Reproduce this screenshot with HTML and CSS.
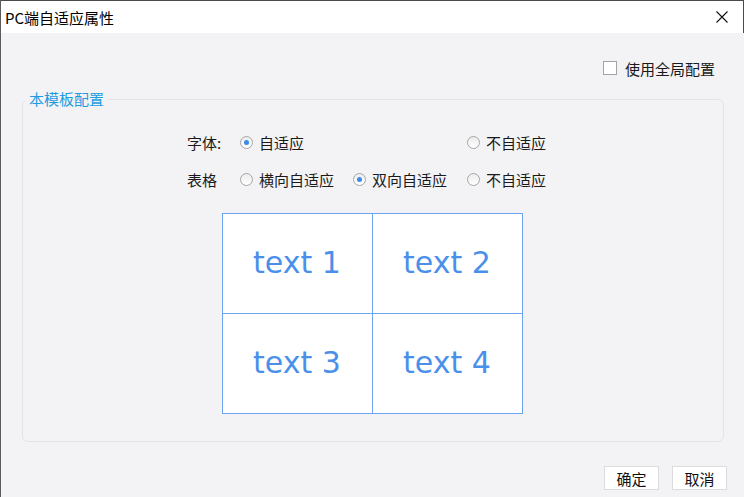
FILE: index.html
```html
<!DOCTYPE html>
<html lang="zh">
<head>
  <meta charset="UTF-8" />
  <title>PC端自适应属性</title>
  <link rel="stylesheet" href="styles.css">
</head>
<body>

<div class="dialog">
  <div class="titlebar">
    <span class="title">PC端自适应属性</span>
    <svg class="close" width="12" height="12" viewBox="0 0 12 12">
      <path d="M0.5 0.5 L11.5 11.5 M11.5 0.5 L0.5 11.5" stroke="#111" stroke-width="1.1" fill="none"/>
    </svg>
  </div>

  <div class="content">
    <div class="global">
      <span class="checkbox"></span>
      <span>使用全局配置</span>
    </div>

    <!-- 本模板配置 -->
    <fieldset class="panel">
      <legend>本模板配置</legend>

      <div class="options">
        <span class="label">字体:</span>
        <span class="opt"><span class="radio checked"></span>自适应</span>
        <span class="opt"></span>
        <span class="opt"><span class="radio"></span>不自适应</span>

        <span class="label">表格</span>
        <span class="opt"><span class="radio"></span>横向自适应</span>
        <span class="opt"><span class="radio checked"></span>双向自适应</span>
        <span class="opt"><span class="radio"></span>不自适应</span>
      </div>

      <div class="preview">
        <div class="cell">text 1</div>
        <div class="cell">text 2</div>
        <div class="cell">text 3</div>
        <div class="cell">text 4</div>
      </div>
    </fieldset>

    <div class="footer">
      <button>确定</button>
      <button>取消</button>
    </div>
  </div>
</div>

</body>
</html>
```

FILE: styles.css
```css
* {
  box-sizing: border-box;
}

body {
  margin: 0;
  font-family: "Microsoft YaHei", "Noto Sans CJK SC", sans-serif;
  font-size: 15px;
  color: #1a1a1a;
  background: #f3f3f6;
}

.dialog {
  width: 744px;
  height: 497px;
  border-left: 1px solid #5a5a5a;
  background: #f3f3f6;
}

.titlebar {
  height: 33px;
  background: white;
  border-top: 1px solid #4a4a4a;
  border-right: 1px solid #4a4a4a;
  display: flex;
  align-items: center;
  justify-content: space-between;
  padding: 0 15px 0 4px;
}

.title {
  font-size: 15px;
  color: #000;
}

.content {
  padding: 0 20px 0 21px;
}

.global {
  display: flex;
  justify-content: flex-end;
  align-items: center;
  gap: 8px;
  height: 20px;
  margin-top: 25px;
  padding-right: 9px;
  color: #1a1a1a;
}

.checkbox {
  width: 14px;
  height: 14px;
  border: 1px solid #a3a3a3;
  background: white;
}

.panel {
  margin: 11px 0 0 0;
  padding: 0 0 27px 0;
  border: 1px solid #e4e4e8;
  border-radius: 6px;
  min-width: 0;
}

.panel legend {
  margin-left: 2px;
  padding: 0 4px;
  line-height: 20px;
  color: #1d9ce0;
}

.options {
  display: grid;
  grid-template-columns: 53px 113px 114px auto;
  row-gap: 13px;
  margin: 21px 0 0 164px;
}

.options > span {
  height: 24px;
  display: flex;
  align-items: center;
}

.opt {
  gap: 6px;
}

.radio {
  width: 13px;
  height: 13px;
  border-radius: 50%;
  border: 1px solid #a6a6a6;
  background: linear-gradient(#ececec, #ffffff);
  position: relative;
}

.radio.checked::after {
  content: "";
  position: absolute;
  left: 3px;
  top: 3px;
  width: 5px;
  height: 5px;
  border-radius: 50%;
  background: #3a8ae8;
}

.preview {
  display: grid;
  grid-template-columns: 150px 150px;
  grid-template-rows: 100px 100px;
  width: 301px;
  margin: 22px auto 0 auto;
  transform: translateX(-1px);
  background: white;
  border-top: 1px solid #6aa4f2;
  border-left: 1px solid #6aa4f2;
}

.cell {
  display: flex;
  align-items: center;
  justify-content: center;
  border-right: 1px solid #6aa4f2;
  border-bottom: 1px solid #6aa4f2;
  font-family: "DejaVu Sans", Verdana, sans-serif;
  font-size: 30px;
  color: #4a90ea;
  padding-bottom: 3px;
}

.footer {
  display: flex;
  justify-content: flex-end;
  gap: 13px;
  margin: 24px -3px 0 0;
}

.footer button {
  width: 55px;
  height: 24px;
  padding: 0;
  font-family: inherit;
  font-size: 15px;
  color: #111;
  background: white;
  border: 1px solid #dcdcdc;
}
```
